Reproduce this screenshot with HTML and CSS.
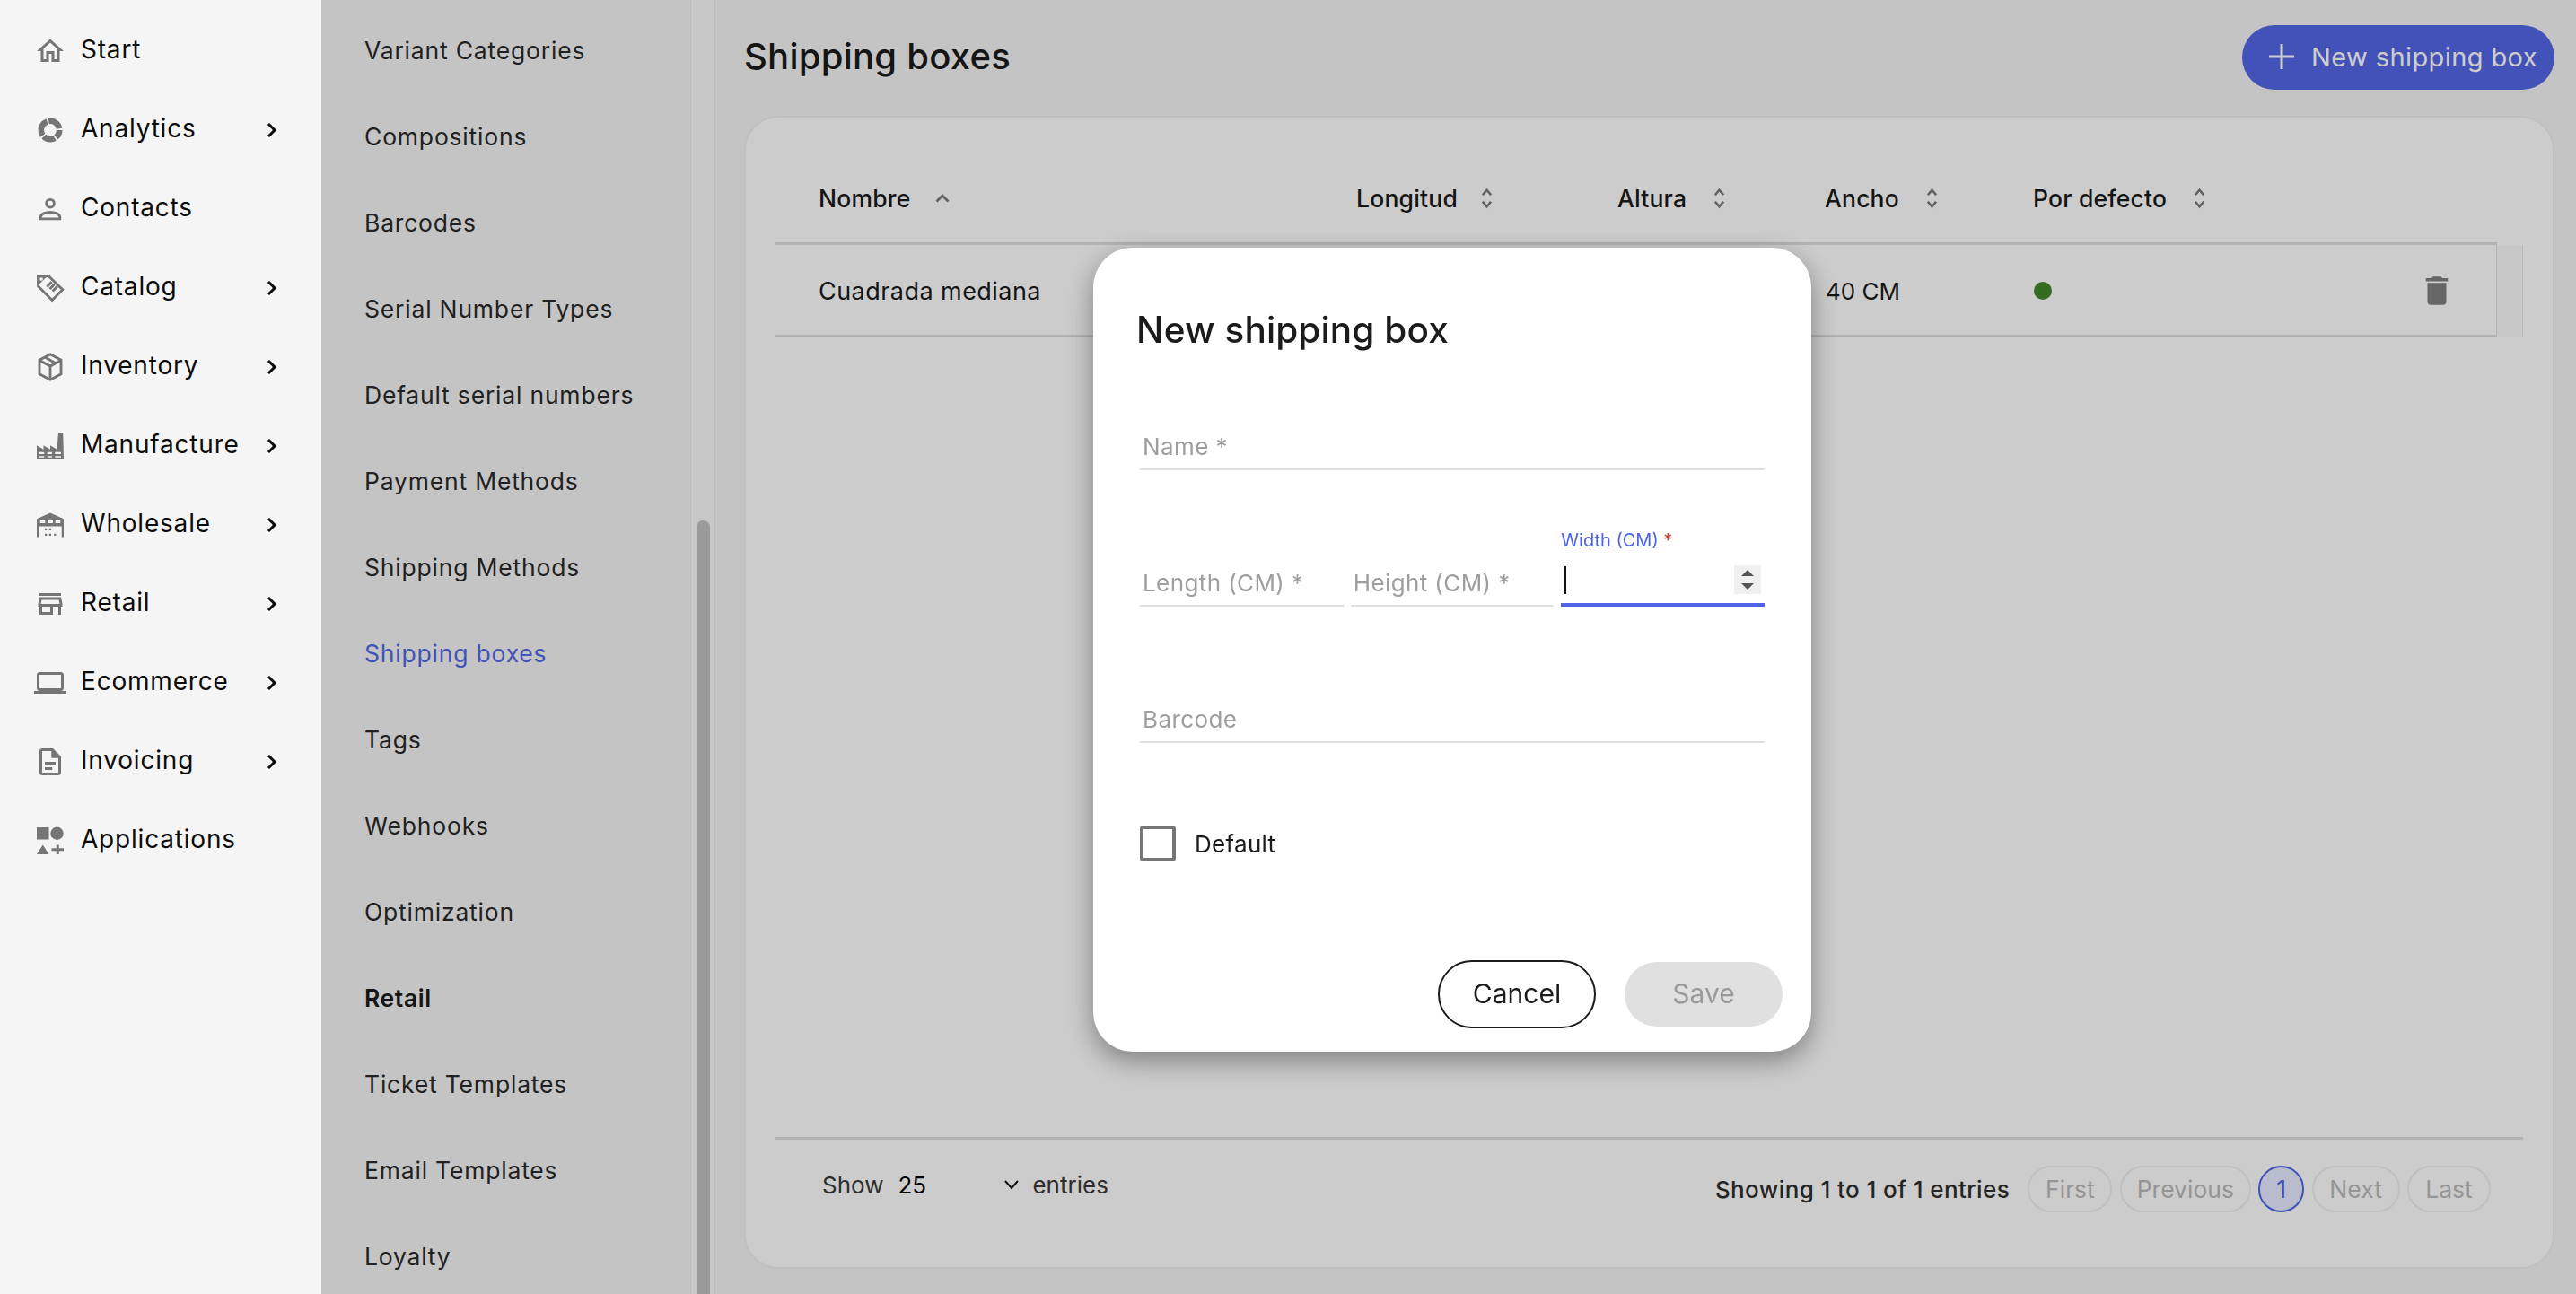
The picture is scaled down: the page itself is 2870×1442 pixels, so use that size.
FILE: index.html
```html
<!DOCTYPE html>
<html lang="en">
<head>
<meta charset="utf-8">
<title>Shipping boxes</title>
<link rel="stylesheet" href="styles.css">
</head>
<body>
<div class="app">
  <nav class="sidebar">
    <a class="nav-item"><svg class="nav-icon" viewBox="0 0 24 24"><path d="M12 5.69l5 4.5V18h-2v-6H9v6H7v-7.81l5-4.5M12 3L2 12h3v8h6v-6h2v6h6v-8h3L12 3z"/></svg><span class="nav-label">Start</span></a>
    <a class="nav-item"><svg class="nav-icon" viewBox="0 0 24 24"><circle class="ring" cx="12" cy="12" r="6.800" pathLength="360" transform="rotate(-100 12 12)"/></svg><span class="nav-label">Analytics</span><svg class="nav-chevron" viewBox="0 0 24 24"><path d="M9 5l7 7-7 7"/></svg></a>
    <a class="nav-item"><svg class="nav-icon" viewBox="0 0 24 24"><g class="line"><circle cx="12" cy="7.800" r="2.900"/><path d="M4.800 19.200v-1c0-2.600 3.800-3.900 7.200-3.900s7.200 1.300 7.200 3.900v1z"/></g></svg><span class="nav-label">Contacts</span></a>
    <a class="nav-item"><svg class="nav-icon" viewBox="0 0 24 24"><path class="line" d="M3 3h7.600l10.600 10.200-7.800 7.800L3 10.600z"/><path d="M2.500 2.500h8L2.500 10.500z"/><circle class="hole" cx="5.400" cy="5.400" r="1.200"/><path class="line" d="M9.600 10.400l4-2.900M11.400 12.400l4-2.900M13.200 14.400l4-2.900" transform="rotate(-9 13 11)"/></svg><span class="nav-label">Catalog</span><svg class="nav-chevron" viewBox="0 0 24 24"><path d="M9 5l7 7-7 7"/></svg></a>
    <a class="nav-item"><svg class="nav-icon" viewBox="0 0 24 24"><g class="line"><path d="M12 2.500l8 4.300v10.400l-8 4.300-8-4.300V6.800z"/><path d="M4 7l8 4.400L20 7M12 11.400v10M8 4.700l8 4.400"/></g></svg><span class="nav-label">Inventory</span><svg class="nav-chevron" viewBox="0 0 24 24"><path d="M9 5l7 7-7 7"/></svg></a>
    <a class="nav-item"><svg class="nav-icon" viewBox="0 0 24 24"><path fill-rule="evenodd" d="M2 22V11.500l5 3v-3l5 3v-3l5 3 1-12.500h3.500L22 22zM4 16.500v1.500h3.500v-1.500zM9.800 16.500v1.500h3.500v-1.500zM15.500 16.500v1.500H20v-1.500zM4 19.500V20.500h3.500v-1zM9.800 19.500V20.500h3.500v-1zM15.500 19.500V20.500H20v-1z"/></svg><span class="nav-label">Manufacture</span><svg class="nav-chevron" viewBox="0 0 24 24"><path d="M9 5l7 7-7 7"/></svg></a>
    <a class="nav-item"><svg class="nav-icon" viewBox="0 0 24 24"><path fill-rule="evenodd" d="M12 3l10 4.500V21h-1.500V13h-17v8H2V7.500zM4.500 8.500v2.200h3.700V8.500zM10 8.500v2.200h4V8.500zM15.800 8.500v2.200h3.700V8.500z"/><path d="M8 14.500h1.500V16H8zM11.200 14.500h1.500V16h-1.500zM8 18.500h1.500V20H8zM11.200 18.500h1.500V20h-1.500zM14.800 18.500h1.500V20h-1.500z"/></svg><span class="nav-label">Wholesale</span><svg class="nav-chevron" viewBox="0 0 24 24"><path d="M9 5l7 7-7 7"/></svg></a>
    <a class="nav-item"><svg class="nav-icon" viewBox="0 0 24 24"><path d="M18.360 9l.6 3H5.040l.6-3h12.720M20 4H4v2h16V4zm0 3H4l-1 5v2h1v6h10v-6h4v6h2v-6h1v-2l-1-5zM6 18v-4h6v4H6z"/></svg><span class="nav-label">Retail</span><svg class="nav-chevron" viewBox="0 0 24 24"><path d="M9 5l7 7-7 7"/></svg></a>
    <a class="nav-item"><svg class="nav-icon" viewBox="0 0 24 24"><path d="M20 18c1.100 0 1.990-.9 1.990-2L22 6c0-1.100-.9-2-2-2H4c-1.100 0-2 .9-2 2v10c0 1.100.9 2 2 2H0v2h24v-2h-4zM4 6h16v10H4V6z"/></svg><span class="nav-label">Ecommerce</span><svg class="nav-chevron" viewBox="0 0 24 24"><path d="M9 5l7 7-7 7"/></svg></a>
    <a class="nav-item"><svg class="nav-icon" viewBox="0 0 24 24"><path d="M14 2H6c-1.100 0-2 .9-2 2v16c0 1.100.89 2 1.990 2H18c1.100 0 2-.9 2-2V8l-6-6zm4 18H6V4h7v5h5v11z"/><path d="M13 3l6 6h-6zM8 12h8v2H8zM8 16h5.500v2H8z"/></svg><span class="nav-label">Invoicing</span><svg class="nav-chevron" viewBox="0 0 24 24"><path d="M9 5l7 7-7 7"/></svg></a>
    <a class="nav-item"><svg class="nav-icon" viewBox="0 0 24 24"><path d="M2 2h9v9H2zM6.500 15L11 22H2zM16.500 15h2v2.500H22v2h-3.500V22h-2v-2.500H13v-2h3.500z"/><circle cx="17" cy="6.500" r="4.800"/></svg><span class="nav-label">Applications</span></a>
  </nav>

  <aside class="subnav">
    <ul class="subnav-list">
      <li class="subnav-item">Variant Categories</li>
      <li class="subnav-item">Compositions</li>
      <li class="subnav-item">Barcodes</li>
      <li class="subnav-item">Serial Number Types</li>
      <li class="subnav-item">Default serial numbers</li>
      <li class="subnav-item">Payment Methods</li>
      <li class="subnav-item">Shipping Methods</li>
      <li class="subnav-item is-active">Shipping boxes</li>
      <li class="subnav-item">Tags</li>
      <li class="subnav-item">Webhooks</li>
      <li class="subnav-item">Optimization</li>
      <li class="subnav-item is-heading">Retail</li>
      <li class="subnav-item">Ticket Templates</li>
      <li class="subnav-item">Email Templates</li>
      <li class="subnav-item">Loyalty</li>
    </ul>
    <div class="scroll-track"><div class="scroll-thumb"></div></div>
  </aside>

  <main class="main">
    <header class="page-head">
      <h1 class="page-title">Shipping boxes</h1>
      <button class="btn-new"><svg class="btn-plus" viewBox="0 0 28 28"><path d="M14 0v28M0 14h28"/></svg><span>New shipping box</span></button>
    </header>
    <section class="card">
      <div class="table-head">
        <div class="tr">
          <div class="th">Nombre<svg class="sort sort-up" viewBox="0 0 16 10"><path d="M1.500 8.500L8 2l6.500 6.500"/></svg></div>
          <div class="th th-length">Longitud<svg class="sort" viewBox="0 0 14 24"><path d="M2 8l5-6 5 6M2 16l5 6 5-6"/></svg></div>
          <div class="th">Altura<svg class="sort" viewBox="0 0 14 24"><path d="M2 8l5-6 5 6M2 16l5 6 5-6"/></svg></div>
          <div class="th">Ancho<svg class="sort" viewBox="0 0 14 24"><path d="M2 8l5-6 5 6M2 16l5 6 5-6"/></svg></div>
          <div class="th">Por defecto<svg class="sort" viewBox="0 0 14 24"><path d="M2 8l5-6 5 6M2 16l5 6 5-6"/></svg></div>
        </div>
      </div>
      <div class="table-row">
        <div class="tr tr-body">
          <div class="td td-name">Cuadrada mediana</div>
          <div class="td">40 CM</div>
          <div class="td">40 CM</div>
          <div class="td">40 CM</div>
          <div class="td td-last"><span class="dot"></span><svg class="trash" viewBox="0 0 24 24"><path d="M6 19c0 1.100.9 2 2 2h8c1.100 0 2-.9 2-2V7H6v12zM19 4h-3.500l-1-1h-5l-1 1H5v2h14V4z"/></svg></div>
        </div>
        <div class="row-end"></div>
      </div>
      <footer class="card-foot">
        <div class="page-size">
          <span>Show</span><span class="size-value">25</span><svg class="size-chevron" viewBox="0 0 18 12"><path d="M2 2l7 8 7-8"/></svg><span>entries</span>
        </div>
        <div class="pager">
          <span class="pager-info">Showing 1 to 1 of 1 entries</span>
          <span class="pg pg-first">First</span>
          <span class="pg pg-prev">Previous</span>
          <span class="pg pg-current">1</span>
          <span class="pg pg-next">Next</span>
          <span class="pg pg-last">Last</span>
        </div>
      </footer>
    </section>
  </main>
</div>

<div class="overlay">
  <div class="modal">
    <h2 class="modal-title">New shipping box</h2>
    <div class="field"><span class="placeholder">Name *</span></div>
    <div class="field-row">
      <div class="field"><span class="placeholder">Length (CM) *</span></div>
      <div class="field"><span class="placeholder">Height (CM) *</span></div>
      <div class="field is-focused">
        <span class="float-label">Width (CM) <span class="req">*</span></span>
        <span class="caret"></span>
        <span class="spinner"><svg viewBox="0 0 16 24"><path d="M8 1l7 7H1zM1 16h14l-7 7z"/></svg></span>
      </div>
    </div>
    <div class="field"><span class="placeholder">Barcode</span></div>
    <label class="check-row"><span class="checkbox"></span><span>Default</span></label>
    <div class="modal-actions">
      <button class="btn-cancel">Cancel</button>
      <button class="btn-save">Save</button>
    </div>
  </div>
</div>
</body>
</html>
```
FILE: styles.css
```css
* { box-sizing: border-box; }
html, body { margin: 0; height: 1442px; overflow: hidden; }
body { font-family: Inter, "Liberation Sans", sans-serif; color: #1b1b1b; background: #f5f5f5; }
h1, h2, ul { margin: 0; padding: 0; }
button { font-family: inherit; cursor: pointer; }

.app { display: flex; height: 1442px; }

/* primary sidebar */
.sidebar { position: relative; z-index: 20; flex: 0 0 358px; padding-top: 11px; background: #f5f5f5; }
.nav-item { display: flex; align-items: center; height: 88px; padding-left: 38px; color: #0c0c0c; }
.nav-icon { flex: 0 0 36px; width: 36px; height: 36px; margin-top: 4px; fill: #757575; }
.nav-label { flex: 1; margin-left: 16px; font-size: 28px; line-height: 40px; letter-spacing: .8px; }
.nav-chevron { flex: 0 0 24px; width: 24px; height: 24px; margin: 4px 44px 0 0; fill: none; stroke: #0c0c0c; stroke-width: 3; }
.ring { fill: none; stroke: #757575; stroke-width: 4.400; stroke-dasharray: 90 10 50 10 75 10 105 10; }
.line { fill: none; stroke: #757575; stroke-width: 1.900; }
.hole { fill: #f5f5f5; }

/* secondary nav */
.subnav { flex: 0 0 439px; display: flex; background: #f5f5f5; }
.subnav-list { flex: 0 0 412px; list-style: none; padding: 8px 0 0 48px; border-right: 1px solid #ececec; overflow: hidden; }
.subnav-item { height: 96px; line-height: 96px; font-size: 26.500px; letter-spacing: .8px; color: #2a2a2a; white-space: nowrap; }
.is-active { color: #5268e6; }
.is-heading { font-weight: 600; color: #1b1b1b; letter-spacing: .6px; }
.scroll-track { flex: 1; background: #fafafa; border-right: 1px solid #ececec; padding: 580px 5px 0 6px; }
.scroll-thumb { height: 900px; border-radius: 8px; background: #c1c1c1; }

/* main */
.main { flex: 1; min-width: 0; padding: 28px 24px 28px 32px; display: flex; flex-direction: column; }
.page-head { display: flex; justify-content: space-between; align-items: center; height: 72px; margin-bottom: 29px; }
.page-title { padding-bottom: 2px; font-size: 40px; font-weight: 500; line-height: 70px; letter-spacing: .25px; color: #1b1b1b; }
.btn-new { display: flex; align-items: center; width: 348px; height: 72px; padding: 0 0 2px 30px; border: 0; border-radius: 36px; background: #5367e7; color: #fff; font-size: 29px; letter-spacing: .4px; white-space: nowrap; }
.btn-plus { width: 28px; height: 28px; margin-right: 19px; fill: none; stroke: #fff; stroke-width: 3; }

.card { flex: 1; display: flex; flex-direction: column; padding: 0 33px 0 33px; border: 2px solid #f0f0f0; border-radius: 38px; background: #fff; }
.table-head { height: 142px; padding-right: 29px; }
.tr { display: grid; grid-template-columns: 599px 291px 231px 232px 1fr; height: 100%; }
.table-head .tr { border-bottom: 3px solid #e0e0e0; align-items: center; padding-top: 41px; }
.th { display: flex; align-items: center; padding-left: 48px; font-size: 26.500px; font-weight: 500; letter-spacing: .2px; white-space: nowrap; }
.sort { width: 13px; height: 24px; margin-left: 30px; fill: none; stroke: #7a7a7a; stroke-width: 2.800; }
.th-length .sort { margin-left: 26px; }
.sort-up { width: 16px; height: 10px; margin-left: 28px; }

.table-row { display: flex; height: 103px; }
.tr-body { flex: 1; align-items: center; padding-top: 2px; border-bottom: 3px solid #e0e0e0; border-right: 1px solid #e0e0e0; }
.td { padding-left: 49px; font-size: 26px; white-space: nowrap; }
.td-name { padding-left: 48px; font-size: 27px; letter-spacing: .45px; }
.td-last { display: flex; align-items: center; justify-content: space-between; padding-right: 45px; }
.dot { width: 20px; height: 20px; border-radius: 50%; background: #40882a; }
.trash { width: 42px; height: 42px; fill: #808080; }
.row-end { flex: 0 0 29px; background: #fafafa; border-right: 1px solid #e8e8e8; }

.card-foot { margin-top: auto; height: 145px; display: flex; justify-content: space-between; border-top: 3px solid #e0e0e0; padding: 0 36px 0 52px; }
.page-size { display: flex; align-items: center; height: 100px; font-size: 26px; color: #3a3a3a; }
.size-value { margin-left: 16px; width: 118px; color: #000; }
.size-chevron { width: 18px; height: 12px; margin-right: 14px; fill: none; stroke: #111; stroke-width: 2; }
.pager { display: flex; align-items: center; gap: 8.400px; height: 110px; }
.pager-info { margin-right: 12px; font-size: 26px; font-weight: 500; letter-spacing: .4px; color: #2f2f2f; }
.pg { display: flex; align-items: center; justify-content: center; height: 52px; border: 2px solid #f0f0f0; border-radius: 26px; font-size: 26.500px; color: #bbb; }
.pg-first { width: 94px; }
.pg-prev { width: 146px; }
.pg-current { width: 51px; border-color: #5268e6; background: #e7ebff; color: #5268e6; }
.pg-next { width: 98px; }
.pg-last { width: 93px; }

/* modal */
.overlay { position: fixed; inset: 0 0 0 358px; z-index: 10; background: rgba(0, 0, 0, .2); }
.modal { position: absolute; left: 860px; top: 276px; width: 800px; height: 896px; padding: 62px 52px 0; border-radius: 44px; background: #fff; box-shadow: 0 10px 30px rgba(0, 0, 0, .38); }
.modal-title { margin: 0 0 66px -4px; font-size: 40.500px; font-weight: 500; line-height: 60px; letter-spacing: .1px; color: #1b1b1b; }
.field { position: relative; display: flex; align-items: flex-end; height: 60px; margin-bottom: 92px; padding: 0 3px 6px; border-bottom: 2px solid #e0e0e0; }
.placeholder { font-size: 26px; line-height: 36px; letter-spacing: .4px; color: #9e9e9e; white-space: nowrap; }
.field-row { display: grid; grid-template-columns: repeat(3, 1fr); gap: 8px; }
.is-focused { border-bottom: 4px solid #4f63e7; }
.float-label { position: absolute; left: 0; top: -30px; font-size: 20px; line-height: 32px; color: #4f63e7; white-space: nowrap; }
.req { color: #d93025; }
.caret { position: absolute; left: 4px; top: 15px; width: 2px; height: 31px; background: #111; }
.spinner { position: absolute; right: 4px; top: 14px; display: flex; align-items: center; justify-content: center; width: 30px; height: 32px; background: #f0f0f0; }
.spinner svg { width: 16px; height: 24px; fill: #555; }
.check-row { display: flex; align-items: center; gap: 21px; height: 40px; font-size: 26px; letter-spacing: .3px; color: #1b1b1b; }
.checkbox { width: 40px; height: 40px; border: 4px solid #757575; border-radius: 4px; }
.modal-actions { display: flex; align-items: center; justify-content: flex-end; gap: 32px; margin: 110px -20px 0 0; }
.btn-cancel { width: 176px; height: 76px; padding: 0 0 2px; border: 2px solid #1b1b1b; border-radius: 38px; background: #fff; color: #1b1b1b; font-size: 30px; }
.btn-save { width: 176px; height: 72px; padding: 0 0 2px; border: 0; border-radius: 36px; background: #e0e0e0; color: #9a9a9a; font-size: 30px; }
```
